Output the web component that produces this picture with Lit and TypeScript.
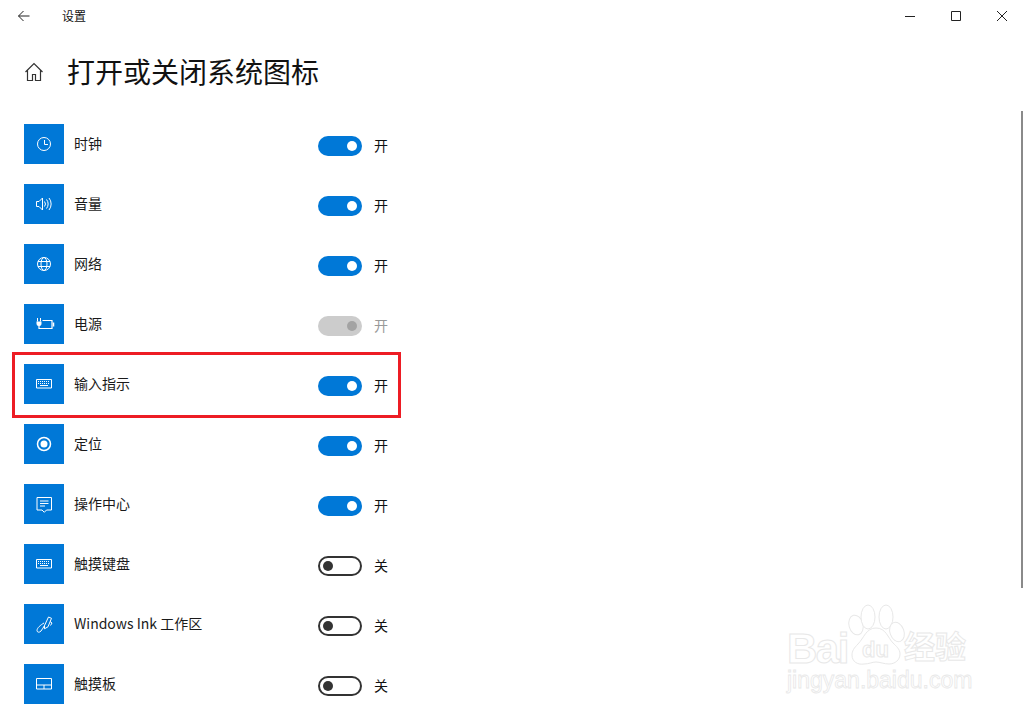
import { LitElement, html, css, svg } from "lit";
import { customElement } from "lit/decorators.js";

const keyboard = svg`<path d="M12.500 15.500h15v8.500h-15z" fill="none" stroke="#fff"/><path d="M14 17.500h12M14 19.500h12" stroke="#fff" stroke-dasharray="1 1"/><path d="M16 21.500h8" stroke="#fff"/>`;

const icons: Record<string, unknown> = {
  clock: svg`<circle cx="20" cy="20" r="6.500" fill="none" stroke="#fff"/><path d="M20.500 16v4.500H24" fill="none" stroke="#fff"/>`,
  volume: svg`<path d="M12.500 17.500h2.500l3.500-3.500v12l-3.500-3.500h-2.500z" fill="none" stroke="#fff"/><path d="M20.500 17.500a4 4 0 0 1 0 5M22.500 15.500a7 7 0 0 1 0 9M25 14a9.500 9.500 0 0 1 0 12" fill="none" stroke="#fff"/>`,
  globe: svg`<circle cx="20" cy="20" r="6.500" fill="none" stroke="#fff"/><ellipse cx="20" cy="20" rx="3" ry="6.500" fill="none" stroke="#fff"/><path d="M14 17.500h12M14 22.500h12" stroke="#fff"/>`,
  power: svg`<path d="M18.500 16.500h9.500v8H15v-3.500" fill="none" stroke="#fff" stroke-width="1.200"/><path d="M29.500 18.500v4" stroke="#fff" stroke-width="1.500"/><path d="M12.500 17.500h5v2a2.500 2.500 0 0 1-5 0z" fill="#fff"/><path d="M13.500 14v3.500M16.500 14v3.500" fill="none" stroke="#fff"/>`,
  location: svg`<circle cx="20" cy="20" r="6.500" fill="none" stroke="#fff" stroke-width="1.500"/><circle cx="20" cy="20" r="3.500" fill="#fff"/>`,
  action: svg`<path d="M13 13.500h14.500v12.500h-5l-2.200 2.300-2.300-2.300H13z" fill="none" stroke="#fff"/><path d="M16 17h8.500M16 19.500h8.500M16 22h5" stroke="#fff"/>`,
  pen: svg`<path d="M20.500 21.500l4-8.500 3 1.300-3.500 8.500-3.500 2z" fill="none" stroke="#fff"/><path d="M26 17.500l2 1.500-1.500 2.500M20 19c-3.500 2-7 5-7 7.500 0 2 2.500 2.300 4 .5 1.500-1.800 2.500-4 3.500-5.500" fill="none" stroke="#fff"/>`,
  touchpad: svg`<path d="M12.500 14.500h15v10.500h-15zM12.500 21h15M20 21v4" fill="none" stroke="#fff"/>`,
};

type Row = { icon: string; label: string; on: boolean; disabled?: boolean };
const rows: Row[] = [
  { icon: "clock", label: "时钟", on: true },
  { icon: "volume", label: "音量", on: true },
  { icon: "globe", label: "网络", on: true },
  { icon: "power", label: "电源", on: true, disabled: true },
  { icon: "keyboard", label: "输入指示", on: true },
  { icon: "location", label: "定位", on: true },
  { icon: "action", label: "操作中心", on: true },
  { icon: "keyboard", label: "触摸键盘", on: false },
  { icon: "pen", label: "Windows Ink 工作区", on: false },
  { icon: "touchpad", label: "触摸板", on: false },
];

@customElement("app-root")
export class AppRoot extends LitElement {
  static styles = css`
    :host {
      display: block;
      position: relative;
      width: 1025px;
      height: 715px;
      overflow: hidden;
      background: #fff;
      color: #000;
      font-family: "Noto Sans CJK SC", "Liberation Sans", sans-serif;
    }
    .titlebar {
      display: flex;
      align-items: center;
      height: 32px;
    }
    .back {
      width: 48px;
      display: flex;
      justify-content: center;
    }
    .apptitle {
      margin-left: 14px;
      font-size: 12px;
      line-height: 32px;
      color: #111;
    }
    .winbtns {
      margin-left: auto;
      display: flex;
    }
    .winbtn {
      width: 46px;
      height: 32px;
      display: flex;
      align-items: center;
      justify-content: center;
    }
    .header {
      display: flex;
      align-items: center;
      height: 48px;
      margin-top: 16px;
      padding-left: 24px;
    }
    .home {
      width: 20px;
      height: 20px;
    }
    .h1 {
      margin-left: 23px;
      margin-top: -2px;
      font-size: 28px;
      line-height: 48px;
      font-weight: 400;
      color: #111;
    }
    .list {
      margin-top: 28px;
      padding-left: 24px;
      display: flex;
      flex-direction: column;
      gap: 20px;
    }
    .row {
      display: flex;
      height: 40px;
      align-items: center;
    }
    .tile {
      width: 40px;
      height: 40px;
      background: #0078d7;
      flex: none;
    }
    .label {
      width: 244px;
      margin-left: 10px;
      font-size: 14px;
      line-height: 20px;
      margin-top: -3px;
      color: #1a1a1a;
      white-space: nowrap;
    }
    .toggle {
      width: 44px;
      height: 20px;
      box-sizing: border-box;
      border-radius: 10px;
      display: flex;
      align-items: center;
      padding: 0 5px;
      margin-top: 4px;
      flex: none;
    }
    .toggle.on {
      background: #0078d7;
      justify-content: flex-end;
    }
    .toggle.off {
      border: 2px solid #333;
      padding: 0 3px;
    }
    .toggle.dis {
      background: #ccc;
    }
    .knob {
      width: 10px;
      height: 10px;
      border-radius: 50%;
      background: #fff;
    }
    .off .knob {
      background: #333;
    }
    .dis .knob {
      background: #a3a3a3;
    }
    .state {
      margin-left: 12px;
      font-size: 14px;
      line-height: 20px;
      margin-top: 2px;
      color: #111;
    }
    .state.dis {
      color: #999;
    }
    .highlight {
      position: absolute;
      left: 12px;
      top: 352px;
      width: 389px;
      height: 66px;
      box-sizing: border-box;
      border: 3px solid #ed1c24;
    }
    .scroll {
      position: absolute;
      left: 1021px;
      top: 111px;
      width: 2px;
      height: 477px;
      background: #8a8a8a;
    }
    .wm {
      position: absolute;
      left: 786px;
      top: 604px;
      color: #fff;
      -webkit-text-stroke: 1px #e8e8e8;
      font-family: "Liberation Sans", "Noto Sans CJK SC", sans-serif;
      white-space: nowrap;
    }
    .wm .paw {
      position: absolute;
      left: 0;
      top: 0;
    }
    .wm .bai {
      position: absolute;
      left: 1px;
      top: 25px;
      font-size: 42px;
      font-weight: 700;
      line-height: 40px;
      letter-spacing: -1.500px;
    }
    .wm .du {
      position: absolute;
      left: 76px;
      top: 35px;
      font-size: 22px;
      line-height: 21px;
      font-weight: 700;
    }
    .wm .jy {
      position: absolute;
      left: 118px;
      top: 28px;
      font-size: 31px;
      font-weight: 700;
      line-height: 32px;
    }
    .wm .url {
      position: absolute;
      left: 1px;
      top: 66px;
      font-size: 23px;
      line-height: 20px;
      -webkit-text-stroke-width: 0.800px;
    }
  `;

  private icon(name: string) {
    return html`<svg class="tile" viewBox="0 0 40 40">
      ${name === "keyboard" ? keyboard : icons[name]}
    </svg>`;
  }

  render() {
    return html`
      <div class="titlebar">
        <div class="back">
          <svg width="16" height="16" viewBox="0 0 16 16">
            <path d="M13.500 8H2.500M7.500 3l-5 5 5 5" fill="none" stroke="#222" stroke-width="1"/>
          </svg>
        </div>
        <div class="apptitle">设置</div>
        <div class="winbtns">
          <div class="winbtn">
            <svg width="12" height="12" viewBox="0 0 12 12"><path d="M1 6.500h10" stroke="#222"/></svg>
          </div>
          <div class="winbtn">
            <svg width="12" height="12" viewBox="0 0 12 12"><path d="M1.500 1.500h9v9h-9z" fill="none" stroke="#222"/></svg>
          </div>
          <div class="winbtn">
            <svg width="12" height="12" viewBox="0 0 12 12"><path d="M1 1l10 10M11 1L1 11" stroke="#222"/></svg>
          </div>
        </div>
      </div>
      <div class="header">
        <svg class="home" viewBox="0 0 20 20">
          <path d="M1.500 10L10 1.500 18.500 10M3.500 8.500v10h5v-6h3v6h5v-10" fill="none" stroke="#333" stroke-width="1.200"/>
        </svg>
        <div class="h1">打开或关闭系统图标</div>
      </div>
      <div class="list">
        ${rows.map(
          (r) => html`<div class="row">
            ${this.icon(r.icon)}
            <div class="label">${r.label}</div>
            <div class="toggle ${r.on ? "on" : "off"} ${r.disabled ? "dis" : ""}"><div class="knob"></div></div>
            <div class="state ${r.disabled ? "dis" : ""}">${r.on ? "开" : "关"}</div>
          </div>`
        )}
      </div>
      <div class="highlight"></div>
      <div class="scroll"></div>
      <div class="wm">
        <svg class="paw" width="130" height="80" viewBox="0 0 130 80" fill="#fff" stroke="#e8e8e8">
          <ellipse cx="70" cy="21" rx="7" ry="10" transform="rotate(-15 70 21)"/>
          <ellipse cx="82" cy="13" rx="7" ry="12"/>
          <ellipse cx="100" cy="13" rx="7" ry="12"/>
          <ellipse cx="111" cy="28" rx="7" ry="10" transform="rotate(-20 111 28)"/>
          <path d="M90 24C80 24 78 34 72 40C68 44 66 47 66 51C66 58 72 61 78 60C83 60 86 58 90 58C94 58 98 60 103 60C109 60 114 56 114 50C114 45 110 42 107 39C102 34 100 24 90 24Z"/>
        </svg>
        <div class="bai">Bai</div>
        <div class="du">du</div>
        <div class="jy">经验</div>
        <div class="url">jingyan.baidu.com</div>
      </div>
    `;
  }
}
